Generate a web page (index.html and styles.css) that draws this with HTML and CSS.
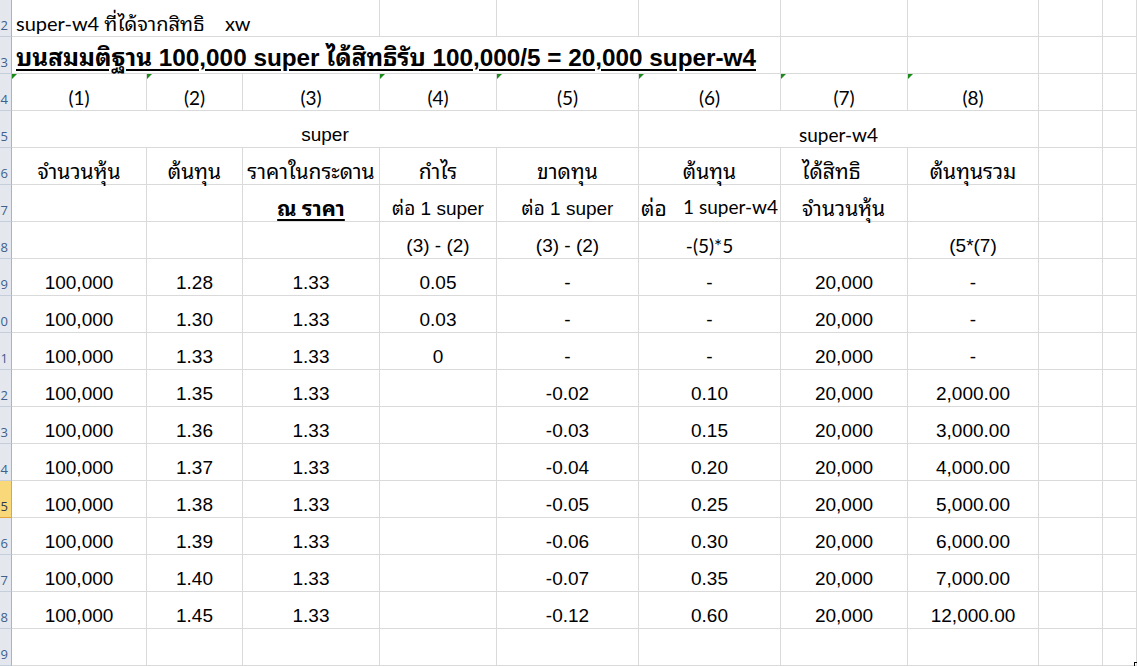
FILE: index.html
```html
<!DOCTYPE html>
<html lang="th">
<head>
<meta charset="utf-8">
<title>super-w4</title>
<link rel="stylesheet" href="styles.css">
</head>
<body>
<div class="sheet">
  <div class="row">
    <div class="rh">2</div>
    <div class="c span3 left cal big">super-w4 ที่ได้จากสิทธิ    xw</div>
    <div class="c"></div><div class="c"></div><div class="c"></div><div class="c"></div><div class="c"></div><div class="c"></div><div class="c"></div>
  </div>
  <div class="row">
    <div class="rh">3</div>
    <div class="c span6 left"><span class="title">บนสมมติฐาน 100,000 super ได้สิทธิรับ 100,000/5 = 20,000 super-w4</span></div>
    <div class="c"></div><div class="c"></div><div class="c"></div><div class="c"></div>
  </div>
  <div class="row">
    <div class="rh">4</div>
    <div class="c cal mark">(1)</div>
    <div class="c cal mark">(2)</div>
    <div class="c cal">(3)</div>
    <div class="c cal mark">(4)</div>
    <div class="c cal mark">(5)</div>
    <div class="c cal mark">(6)</div>
    <div class="c cal mark">(7)</div>
    <div class="c cal mark">(8)</div>
    <div class="c"></div><div class="c"></div>
  </div>
  <div class="row">
    <div class="rh">5</div>
    <div class="c span5">super</div>
    <div class="c span3 cal">super-w4</div>
    <div class="c"></div><div class="c"></div>
  </div>
  <div class="row">
    <div class="rh">6</div>
    <div class="c th">จำนวนหุ้น</div>
    <div class="c th">ต้นทุน</div>
    <div class="c th">ราคาในกระดาน</div>
    <div class="c th">กำไร</div>
    <div class="c th">ขาดทุน</div>
    <div class="c th">ต้นทุน</div>
    <div class="c th left indent">ได้สิทธิ</div>
    <div class="c th">ต้นทุนรวม</div>
    <div class="c"></div><div class="c"></div>
  </div>
  <div class="row">
    <div class="rh">7</div>
    <div class="c"></div>
    <div class="c"></div>
    <div class="c th"><span class="strong">ณ ราคา</span></div>
    <div class="c">ต่อ 1 super</div>
    <div class="c">ต่อ 1 super</div>
    <div class="c split th"><span>ต่อ</span><span class="cal">1 super-w4</span></div>
    <div class="c th left indent">จำนวนหุ้น</div>
    <div class="c"></div><div class="c"></div><div class="c"></div>
  </div>
  <div class="row">
    <div class="rh">8</div>
    <div class="c"></div><div class="c"></div><div class="c"></div>
    <div class="c">(3) - (2)</div>
    <div class="c">(3) - (2)</div>
    <div class="c cal">-(5)*5</div>
    <div class="c"></div>
    <div class="c">(5*(7)</div>
    <div class="c"></div><div class="c"></div>
  </div>
  <div class="row">
    <div class="rh">9</div>
    <div class="c">100,000</div><div class="c">1.28</div><div class="c">1.33</div><div class="c">0.05</div><div class="c">-</div><div class="c">-</div><div class="c">20,000</div><div class="c dash">-</div><div class="c"></div><div class="c"></div>
  </div>
  <div class="row">
    <div class="rh">10</div>
    <div class="c">100,000</div><div class="c">1.30</div><div class="c">1.33</div><div class="c">0.03</div><div class="c">-</div><div class="c">-</div><div class="c">20,000</div><div class="c dash">-</div><div class="c"></div><div class="c"></div>
  </div>
  <div class="row">
    <div class="rh">11</div>
    <div class="c">100,000</div><div class="c">1.33</div><div class="c">1.33</div><div class="c">0</div><div class="c">-</div><div class="c">-</div><div class="c">20,000</div><div class="c dash">-</div><div class="c"></div><div class="c"></div>
  </div>
  <div class="row">
    <div class="rh">12</div>
    <div class="c">100,000</div><div class="c">1.35</div><div class="c">1.33</div><div class="c"></div><div class="c">-0.02</div><div class="c">0.10</div><div class="c">20,000</div><div class="c">2,000.00</div><div class="c"></div><div class="c"></div>
  </div>
  <div class="row">
    <div class="rh">13</div>
    <div class="c">100,000</div><div class="c">1.36</div><div class="c">1.33</div><div class="c"></div><div class="c">-0.03</div><div class="c">0.15</div><div class="c">20,000</div><div class="c">3,000.00</div><div class="c"></div><div class="c"></div>
  </div>
  <div class="row">
    <div class="rh">14</div>
    <div class="c">100,000</div><div class="c">1.37</div><div class="c">1.33</div><div class="c"></div><div class="c">-0.04</div><div class="c">0.20</div><div class="c">20,000</div><div class="c">4,000.00</div><div class="c"></div><div class="c"></div>
  </div>
  <div class="row">
    <div class="rh sel">15</div>
    <div class="c">100,000</div><div class="c">1.38</div><div class="c">1.33</div><div class="c"></div><div class="c">-0.05</div><div class="c">0.25</div><div class="c">20,000</div><div class="c">5,000.00</div><div class="c"></div><div class="c"></div>
  </div>
  <div class="row">
    <div class="rh">16</div>
    <div class="c">100,000</div><div class="c">1.39</div><div class="c">1.33</div><div class="c"></div><div class="c">-0.06</div><div class="c">0.30</div><div class="c">20,000</div><div class="c">6,000.00</div><div class="c"></div><div class="c"></div>
  </div>
  <div class="row">
    <div class="rh">17</div>
    <div class="c">100,000</div><div class="c">1.40</div><div class="c">1.33</div><div class="c"></div><div class="c">-0.07</div><div class="c">0.35</div><div class="c">20,000</div><div class="c">7,000.00</div><div class="c"></div><div class="c"></div>
  </div>
  <div class="row">
    <div class="rh">18</div>
    <div class="c">100,000</div><div class="c">1.45</div><div class="c">1.33</div><div class="c"></div><div class="c">-0.12</div><div class="c">0.60</div><div class="c">20,000</div><div class="c">12,000.00</div><div class="c"></div><div class="c"></div>
  </div>
  <div class="row">
    <div class="rh">19</div>
    <div class="c"></div><div class="c"></div><div class="c"></div><div class="c"></div><div class="c"></div><div class="c"></div><div class="c"></div><div class="c"></div><div class="c"></div><div class="c"></div>
  </div>
  <div class="handle"></div>
</div>
</body>
</html>
```

FILE: styles.css
```css
html, body {
  margin: 0;
  padding: 0;
  background: #ffffff;
  overflow: hidden;
}

.sheet {
  position: relative;
  width: 1137px;
  height: 666px;
  overflow: hidden;
  font-family: "Liberation Sans", Arial, "Noto Sans Thai Looped", "Noto Sans Thai", Tahoma, "Loma", "Garuda", sans-serif;
  font-size: 19px;
  color: #000000;
}

.row {
  display: grid;
  grid-template-columns: 12px 135px 96px 137px 117px 142px 142px 127px 131px 64px 1fr;
  height: 37px;
}

.rh {
  box-sizing: border-box;
  height: 37px;
  background: #e4e8ee;
  border-right: 1px solid #9eb6ce;
  border-bottom: 1px solid #c5cfdb;
  color: #3f5f8c;
  font-family: "Open Sans", "Noto Sans", sans-serif;
  font-size: 13px;
  line-height: 16px;
  display: flex;
  align-items: flex-end;
  justify-content: flex-end;
  padding: 0 3px 3px 0;
  overflow: hidden;
  white-space: nowrap;
}

.rh.sel {
  background: #f8d878;
  border-right-color: #e2a53a;
  border-bottom-color: #e2a53a;
  color: #2d3a4c;
}

.c {
  position: relative;
  box-sizing: border-box;
  height: 37px;
  border-right: 1px solid #dadada;
  border-bottom: 1px solid #dadada;
  display: flex;
  align-items: flex-end;
  justify-content: center;
  line-height: 22px;
  padding-bottom: 1px;
  white-space: pre;
  overflow: visible;
}

.span3 { grid-column: span 3; }
.span5 { grid-column: span 5; }
.span6 { grid-column: span 6; }

.left {
  justify-content: flex-start;
  padding-left: 4px;
}

.indent {
  padding-left: 21px;
}

.cal {
  font-family: "Lato", "Open Sans", "Noto Sans Thai Looped", "Noto Sans Thai", Tahoma, "Loma", sans-serif;
}

.big {
  font-size: 20px;
  padding-bottom: 2px;
}

.th {
  font-family: "Noto Sans Thai Looped", "Noto Sans Thai", Tahoma, "Loma", "Garuda", "Liberation Sans", sans-serif;
  font-size: 21px;
  padding-bottom: 3px;
}

.title {
  font-weight: bold;
  font-size: 24.3px;
  text-decoration: underline;
  text-decoration-thickness: 2px;
  text-underline-offset: 3px;
  line-height: 28px;
}

.strong {
  font-weight: bold;
  text-decoration: underline;
  text-decoration-thickness: 2px;
  text-underline-offset: 3px;
}

.split {
  justify-content: space-between;
  padding: 0 2px 3px 2px;
}

.split .cal {
  font-size: 19px;
}

.mark::before {
  content: "";
  position: absolute;
  left: 0;
  top: 0;
  width: 0;
  height: 0;
  border-top: 5px solid #1a8a1a;
  border-right: 5px solid transparent;
}

.handle {
  position: absolute;
  left: 1134px;
  top: 662px;
  width: 4px;
  height: 5px;
  border-left: 1px solid #000000;
  border-top: 1px solid #000000;
}
```
